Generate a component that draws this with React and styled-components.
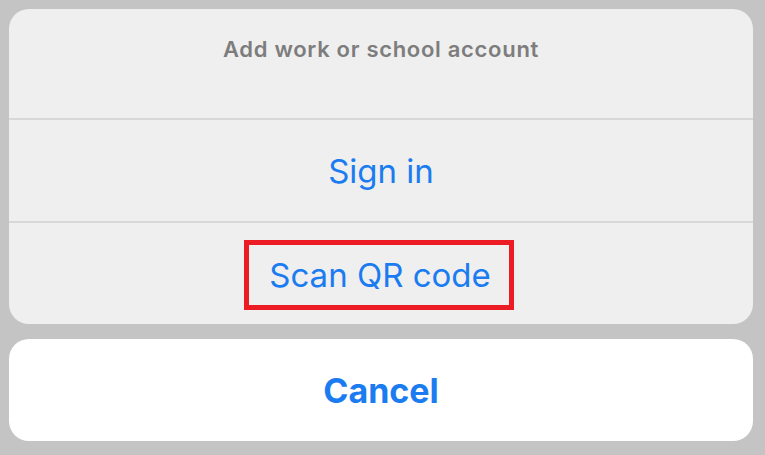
import React from 'react';
import styled, { createGlobalStyle } from 'styled-components';

const Global = createGlobalStyle`
  html, body {
    margin: 0;
    background: #c4c4c4;
  }
  body {
    font-family: Inter, "Open Sans", "Liberation Sans", sans-serif;
  }
`;

const Sheet = styled.div`
  width: 744px;
  padding: 9px 12px 14px 9px;
  display: flex;
  flex-direction: column;
  gap: 15px;
`;

const Group = styled.div`
  background: ${p => (p.light ? '#ffffff' : '#efefef')};
  border-radius: 20px;
  overflow: hidden;
  display: flex;
  flex-direction: column;
`;

const Title = styled.div`
  height: 111px;
  display: flex;
  justify-content: center;
  padding-top: 29px;
  box-sizing: border-box;
  color: #7d7d7d;
  font-size: 22px;
  line-height: 1;
  letter-spacing: 0.7px;
  font-weight: 600;
  border-bottom: 2px solid #d8d8d8;
`;

const Action = styled.div`
  height: ${p => p.h || 103}px;
  box-sizing: border-box;
  display: flex;
  align-items: center;
  justify-content: center;
  padding-top: ${p => p.shift || 0}px;
  color: #1a7cf0;
  font-size: ${p => (p.bold ? 34 : 33)}px;
  font-weight: ${p => (p.bold ? 700 : 400)};
  border-bottom: ${p => (p.last ? 'none' : '2px solid #d8d8d8')};
`;

const Highlight = styled.span`
  display: inline-flex;
  align-items: center;
  height: 60px;
  padding: 0 18px 0 20px;
  margin-right: 4px;
  border: 5px solid #ec1c24;
`;

export default function App() {
  return (
    <>
      <Global />
      <Sheet>
        <Group>
          <Title>Add work or school account</Title>
          <Action>Sign in</Action>
          <Action last h={101} shift={3}>
            <Highlight>Scan QR code</Highlight>
          </Action>
        </Group>
        <Group light>
          <Action last bold h={102}>Cancel</Action>
        </Group>
      </Sheet>
    </>
  );
}
